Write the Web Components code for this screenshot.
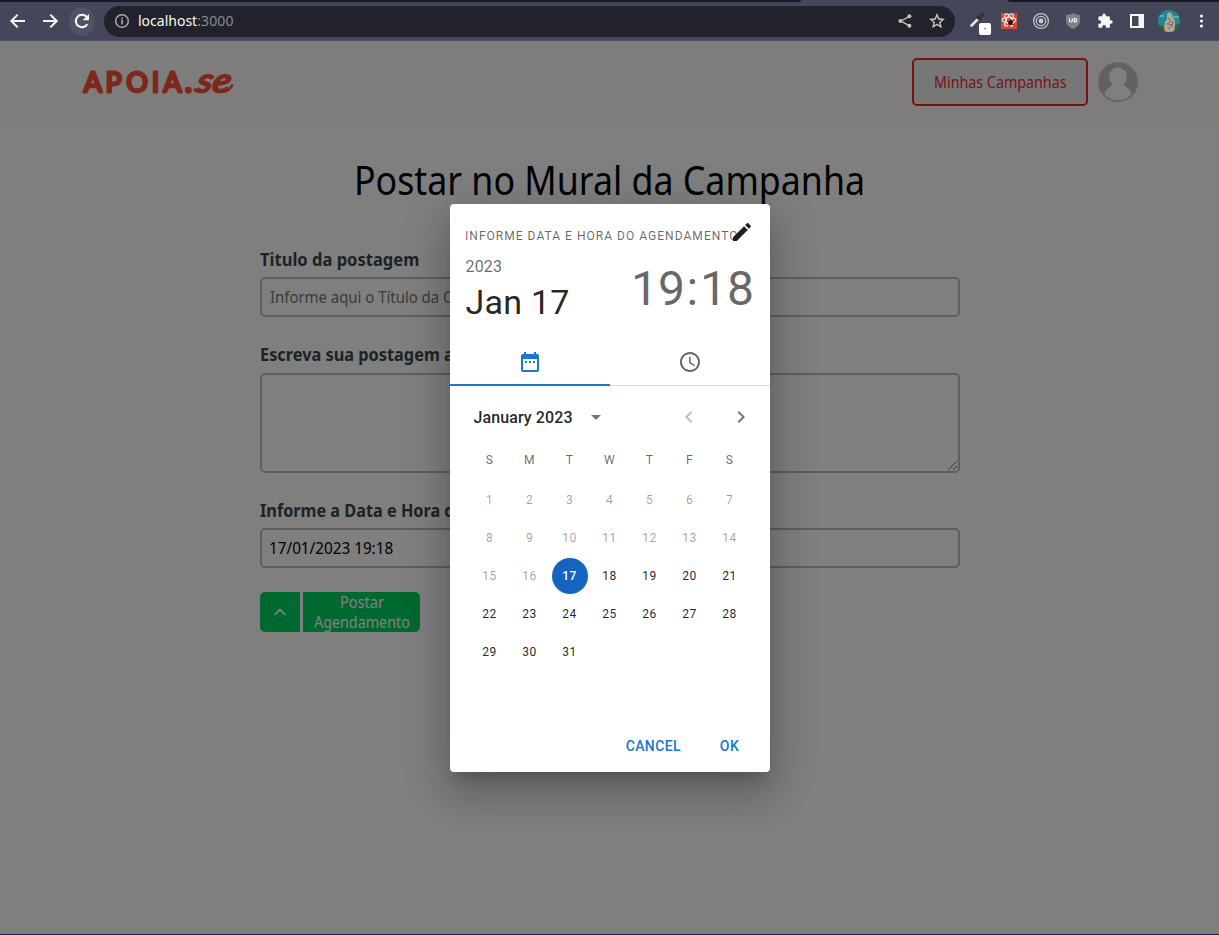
<!DOCTYPE html>
<html lang="pt-BR">
<head>
<meta charset="utf-8">
<title>APOIA.se</title>
<style>
  html, body { margin: 0; height: 100%; overflow: hidden; background: #fff; }
  body { font-family: "Noto Sans", sans-serif; }
</style>
</head>
<body>
<app-window></app-window>

<script>
function component(name, html) {
  const template = document.createElement('template');
  template.innerHTML = html;
  customElements.define(name, class extends HTMLElement {
    constructor() {
      super();
      this.attachShadow({ mode: 'open' }).appendChild(template.content.cloneNode(true));
    }
  });
}

component('app-window', `
  <style>
    :host { display: flex; flex-direction: column; height: 935px; width: 1219px; position: relative; overflow: hidden; }
    main { flex: 1; display: flex; flex-direction: column; background: #fff; }
    footer { height: 1px; background: #1e1d4c; display: flex; }
    .backdrop { position: absolute; inset: 41px 0 1px 0; background: rgba(0,0,0,.5); display: flex; justify-content: center; align-items: flex-start; padding-top: 163px; box-sizing: border-box; padding-left: 1px; }
  </style>
  <browser-bar></browser-bar>
  <main>
    <site-header></site-header>
    <post-form></post-form>
  </main>
  <footer></footer>
  <div class="backdrop"><date-dialog></date-dialog></div>
`);

component('browser-bar', `
  <style>
    :host { display: block; height: 41px; background: #44475a; border-bottom: 0; }
    .tabs { height: 2px; display: flex; justify-content: space-between; }
    .tabs i { background: #191a21; display: block; height: 2px; }
    .tabs i:first-child { width: 801px; border-bottom-right-radius: 2px; }
    .tabs i:last-child { width: 211px; border-bottom-left-radius: 2px; }
    .row { display: flex; align-items: center; height: 38px; border-bottom: 1px solid #4f5169; }
    svg { display: block; flex: none; }
    .nav { display: flex; align-items: center; padding-left: 5px; gap: 6px; width: 104px; box-sizing: border-box; }
    .nav span { width: 26px; height: 29px; display: flex; align-items: center; justify-content: center; }
    .nav .reload { background: #505366; border-radius: 50%; }
    .url { width: 851px; height: 31px; margin-top: 0; box-sizing: border-box; border-radius: 16px; background: #21222c; display: flex; align-items: center; padding: 0 10px; font-size: 14px; color: #f8f8f2; }
    .url .addr { flex: 1; padding-left: 8px; white-space: nowrap; line-height: 20px; }
    .url em { font-style: normal; color: #8b8b90; letter-spacing: .15px; }
    .url .acts { display: flex; gap: 16px; }
    .ext { display: flex; align-items: center; flex: 1; padding-left: 11px; gap: 10px; }
    .ext svg { width: 22px; height: 22px; }
  </style>
  <div class="tabs"><i></i><i></i></div>
  <div class="row">
    <div class="nav">
      <span><svg width="20" height="20" viewBox="0 0 20 20" fill="none" stroke="#f8f8f2" stroke-width="2"><path d="M17 10H4M9.7 3.6 3.3 10l6.4 6.4"/></svg></span>
      <span><svg width="20" height="20" viewBox="0 0 20 20" fill="none" stroke="#f8f8f2" stroke-width="2"><path d="M3 10h13M10.3 3.6l6.4 6.4-6.4 6.4"/></svg></span>
      <span class="reload"><svg width="20" height="20" viewBox="0 0 20 20"><path d="M15.3 13.3A6.2 6.2 0 1 1 14.6 5.8" fill="none" stroke="#f8f8f2" stroke-width="2.1"/><path d="M17 2.9v6.3h-6.3z" fill="#f8f8f2"/></svg></span>
    </div>
    <div class="url">
      <svg width="16" height="16" viewBox="0 0 16 16"><circle cx="8" cy="8" r="6.3" fill="none" stroke="#a9a9aa" stroke-width="1.5"/><path d="M7.2 7.1h1.7v4.2H7.2zM7.2 4.6h1.7v1.6H7.2z" fill="#a9a9aa"/></svg>
      <span class="addr">localhost<em>:3000</em></span>
      <span class="acts">
        <svg width="16" height="16" viewBox="0 0 16 16" fill="#c4c4bf"><path d="M12.2 3.6 3.8 8l8.4 4.6" fill="none" stroke="#c4c4bf" stroke-width="1.4"/><circle cx="12.4" cy="3.3" r="2"/><circle cx="3.4" cy="8" r="2"/><circle cx="12.4" cy="12.8" r="2"/></svg>
        <svg width="16" height="16" viewBox="0 0 24 24" fill="#c4c4bf"><path d="M24 8.6 15.4 7.900 12 0 8.600 7.900 0 8.600l6.500 5.700L4.600 22.700 12 18.300l7.400 4.400-1.900-8.400L24 8.600zM12 15.900l-4.200 2.600 1.100-4.900-3.700-3.200 4.900-.4L12 5.400l1.900 4.600 4.900.4-3.700 3.200 1.100 4.900L12 15.900z"/></svg>
      </span>
    </div>
    <div class="ext">
      <svg viewBox="0 0 22 22" overflow="visible"><path d="M5.500 15.500 12.500 8.500" stroke="#e7e7e4" stroke-width="2.600" stroke-linecap="round"/><path d="M12.500 7.500 16.500 4.500" stroke="#34343a" stroke-width="4" stroke-linecap="round"/><path d="m10.500 6.500 4.500 4" stroke="#34343a" stroke-width="1.800"/><rect x="13" y="13" width="12" height="12" rx="2" fill="#fff"/><path d="M17.800 18h1.200v1.200h-1.200z" fill="#e8a040"/><path d="M19 18h1v1.200h-1z" fill="#4a8cdc"/></svg>
      <svg viewBox="0 0 22 22"><path fill="#d84a38" d="M3 3h16v16H3z"/><g fill="none" stroke="#f2dcd6" stroke-width="1.300"><ellipse cx="11" cy="10" rx="6.800" ry="2.700"/><ellipse cx="11" cy="10" rx="6.800" ry="2.700" transform="rotate(60 11 10)"/><ellipse cx="11" cy="10" rx="6.800" ry="2.700" transform="rotate(120 11 10)"/></g><ellipse cx="12.500" cy="12.500" rx="2" ry="2.900" fill="#2b1010" transform="rotate(35 12.500 12.500)"/><path d="m9 11 7 4M10.500 15.500l5-4.500" stroke="#2b1010" stroke-width=".9"/></svg>
      <svg viewBox="0 0 22 22"><g fill="none" stroke="#bfc0c7" stroke-width="1.300"><circle cx="11" cy="11" r="7.400"/><circle cx="11" cy="11" r="4.700"/></g><circle cx="11" cy="11" r="2.400" fill="#c9cad0"/></svg>
      <svg viewBox="0 0 22 22"><path fill="#808080" d="M11 3c2.500 1.500 5 1.900 7 1.900V11c0 4-3.500 6.500-7 8-3.500-1.500-7-4-7-8V4.900C6 4.900 8.500 4.500 11 3z"/><path d="M7.500 8.200v2.300c0 2 2.800 2 2.800 0V8.200M12.300 8.200v3.700c3.200.2 3.200-3.500 0-3.500" fill="none" stroke="#f2f2f2" stroke-width="1.200"/></svg>
      <svg viewBox="0 0 22 22"><path transform="translate(3 2.800) scale(.68)" fill="#f8f8f2" d="M20.500 11H19V7c0-1.100-.9-2-2-2h-4V3.500C13 2.120 11.880 1 10.500 1S8 2.120 8 3.500V5H4c-1.100 0-1.990.9-1.990 2v3.800H3.500c1.490 0 2.700 1.210 2.700 2.700s-1.210 2.700-2.700 2.700H2V20c0 1.100.9 2 2 2h3.800v-1.500c0-1.490 1.210-2.700 2.700-2.700 1.490 0 2.700 1.210 2.700 2.700V22H17c1.100 0 2-.9 2-2v-4h1.500c1.380 0 2.500-1.120 2.500-2.500S21.880 11 20.500 11z"/></svg>
      <svg viewBox="0 0 22 22"><path fill="#f8f8f2" fill-rule="evenodd" d="M4 4h14v14H4zM6 6v10h6.500V6z"/></svg>
      <svg viewBox="0 0 22 22"><defs><clipPath id="c"><circle cx="11" cy="11" r="11"/></clipPath></defs><g clip-path="url(#c)"><path fill="#218793" d="M0 0h22v22H0z"/><path fill="#4fb0b8" d="M1 5h5v2H1zM15 6h6v2h-6z"/><path fill="#485b26" d="M0 15l5 1 4 6H0zM17 15l5-1v8h-6z"/><path fill="#b3a79b" d="M9 4c1-2 4-2 5 0l.5 3L17 11v4l-1 7H7l-1-5 1-5 2-3z"/><path d="m10 8 3 3-4 3 5 1-4 4M15 11l-1 6" stroke="#75695f" fill="none" stroke-width="1"/></g></svg>
      <svg viewBox="0 0 22 22" fill="#f8f8f2"><circle cx="11.500" cy="6" r="1.600"/><circle cx="11.500" cy="11" r="1.600"/><circle cx="11.500" cy="16" r="1.600"/></svg>
    </div>
  </div>
`);

component('site-header', `
  <style>
    :host { display: flex; height: 81px; box-sizing: border-box; padding: 0 81px 0 82px; align-items: center; justify-content: space-between; background: #fefaf7; }
    .logo text { fill: #f9503f; stroke: #f9503f; stroke-linejoin: round; stroke-linecap: round; }
    .logo .a { font: 400 27px Lato, sans-serif; stroke-width: 2.800px; }
    .logo .b { font: italic 400 33px Lato, sans-serif; stroke-width: 2.200px; }
    .right { display: flex; align-items: center; gap: 10px; }
    button { all: unset; box-sizing: border-box; width: 176px; height: 48px; border: 2px solid #f02820; border-radius: 5px; background: #efefef; color: #f02c30; font-size: 16px; line-height: 24px; display: flex; justify-content: center; align-items: center; }
    svg { display: block; }
  </style>
  <svg class="logo" width="152" height="48" viewBox="0 0 152 48">
    <text class="a" y="33.800"><tspan x="1.800">A</tspan><tspan x="23.600">P</tspan><tspan x="44.200">O</tspan><tspan x="69.700">I</tspan><tspan x="81.200">A</tspan><tspan x="103.300" stroke-width="3.600">.</tspan></text>
    <text class="b" transform="translate(114 33.800) skewX(-10) scale(1.150 1)">se</text>
    <path d="M117 31q-2 4-4.500.5M142 33.800q5-1 8-6.500" fill="none" stroke="#f9503f" stroke-width="2.600" stroke-linecap="round"/>
  </svg>
  <div class="right">
    <button><fit-text w="133">Minhas Campanhas</fit-text></button>
    <svg width="40" height="40" viewBox="0 0 40 40"><defs><clipPath id="p"><circle cx="20" cy="20" r="18.300"/></clipPath></defs><circle cx="20" cy="20" r="20" fill="#cacbcc"/><circle cx="20" cy="20" r="18.700" fill="#c2c3c4"/><g clip-path="url(#p)" fill="#fff"><ellipse cx="20" cy="15" rx="9" ry="9.400"/><path d="M5 38c1-9 5-13 10-15h10c5 2 9 6 10 15z"/></g></svg>
  </div>
`);

component('post-form', `
  <style>
    :host { display: flex; flex-direction: column; width: 700px; margin: 0 auto; padding-left: 1px; color: #37474f; }
    h1 { margin: 0 0 0 -2px; padding-top: 30px; display: flex; justify-content: center; color: #000; font-weight: 400; font-size: 40px; line-height: 56px; }
    .t1 { margin-top: 39px; } .t2 { margin-top: 25px; } .t3 { margin-top: 25px; }
    .label { height: 24px; font-weight: 700; font-size: 18px; line-height: 24px; margin-bottom: 6px; margin-left: -.5px; }
    .t2 { margin-bottom: 7px; }
    .field { box-sizing: border-box; height: 40px; border: 2px solid #bdbdbd; border-radius: 5px; padding: 0 7px; display: flex; align-items: center; font-size: 16px; line-height: 24px; color: #000; }
    .ph { color: #757575; padding-left: 8px; }
    .area { height: 100px; align-items: flex-end; justify-content: flex-end; padding: 0 1px 1px 0; }
    .actions { display: flex; gap: 3px; margin-top: 24px; height: 40px; }
    .actions div { background: #00d25f; color: #fff; display: flex; flex-direction: column; align-items: center; justify-content: center; font-size: 15.500px; line-height: 20px; }
    .up { width: 40px; border-radius: 5px 0 0 5px; }
    .post { width: 117px; border-radius: 0 5px 5px 0; }
  </style>
  <h1><fit-text w="511">Postar no Mural da Campanha</fit-text></h1>
  <div class="label t1"><fit-text w="159">Titulo da postagem</fit-text></div>
  <div class="field ph"><fit-text w="191">Informe aqui o Título da Ca</fit-text></div>
  <div class="label t2"><fit-text w="194">Escreva sua postagem a</fit-text></div>
  <div class="field area"><svg width="9" height="9" viewBox="0 0 9 9" stroke="#777" stroke-width="1"><path d="M0 9 9 0M5 9l4-4"/></svg></div>
  <div class="label t3"><fit-text w="195">Informe a Data e Hora d</fit-text></div>
  <div class="field"><fit-text w="124">17/01/2023 19:18</fit-text></div>
  <div class="actions">
    <div class="up"><svg width="14" height="14" viewBox="0 0 14 14" fill="none" stroke="#fff" stroke-width="1.900"><path d="M1.800 9.800 7 4.600l5.200 5.200"/></svg></div>
    <div class="post"><fit-text w="44">Postar</fit-text><fit-text w="96">Agendamento</fit-text></div>
  </div>
`);

component('date-dialog', `
  <style>
    :host { display: flex; flex-direction: column; width: 320px; height: 568px; background: #fff; border-radius: 4px; font-family: Roboto, sans-serif; color: rgba(0,0,0,.87);
      box-shadow: 0 11px 15px -7px rgba(0,0,0,.2), 0 24px 38px 3px rgba(0,0,0,.14), 0 9px 46px 8px rgba(0,0,0,.12); }
    svg { display: block; }
    .head { height: 134px; box-sizing: border-box; padding: 16px 16px 16px 15.500px; position: relative; }
    .over { font-size: 12px; line-height: 32px; color: rgba(0,0,0,.6); height: 32px; letter-spacing: 1px; margin-left: -.5px; }
    .pen { position: absolute; right: 16px; top: 16px; }
    .vals { display: flex; justify-content: space-between; }
    .year { font-size: 16px; line-height: 28px; padding-top: 1px; letter-spacing: .15px; color: rgba(0,0,0,.6); }
    .day { font-size: 34px; line-height: 42px; letter-spacing: .25px; }
    .time { font-size: 48px; line-height: 56px; padding-top: 9px; color: rgba(0,0,0,.6); display: flex; }
    .time i { font-style: normal; margin: 0 2px 0 1.500px; }
    .tabs { display: flex; height: 48px; box-sizing: border-box; border-bottom: 1px solid rgba(0,0,0,.12); }
    .tabs span { flex: 1; height: 48px; box-sizing: border-box; display: flex; align-items: center; justify-content: center; color: rgba(0,0,0,.6); }
    .tabs .on { color: #1976d2; border-bottom: 2px solid #1976d2; padding-top: 2px; }
    .month { display: flex; align-items: center; height: 30px; margin: 16px 12px 0 23.500px; font-size: 16px; font-weight: 500; letter-spacing: .1px; }
    .month b { font-weight: 500; width: 109.500px; }
    .month .sp { flex: 1; }
    .prev { color: rgba(0,0,0,.26); margin-right: 28px; } .next, .dd { color: rgba(0,0,0,.54); }
    month-grid { margin: 8px 20px 0; }
    .acts { margin-top: auto; height: 52px; display: flex; justify-content: flex-end; padding-right: 8.500px; align-items: center; gap: 11.500px; color: #1976d2; font-size: 14px; font-weight: 500; letter-spacing: .4px; }
    .acts span { min-width: 64px; padding: 0 5px; height: 36px; line-height: 37px; box-sizing: border-box; text-align: center; }
  </style>
  <div class="head">
    <div class="over"><fit-text w="273">INFORME DATA E HORA DO AGENDAMENTO</fit-text></div>
    <svg class="pen" width="24" height="24" viewBox="0 0 24 24"><path fill="#202020" d="M3 17.250V21h3.750L17.810 9.940l-3.750-3.750L3 17.250zM20.710 7.040c.39-.39.39-1.020 0-1.410l-2.340-2.340c-.39-.39-1.020-.39-1.410 0l-1.830 1.830 3.750 3.750 1.830-1.830z"/></svg>
    <div class="vals">
      <div><div class="year">2023</div><div class="day">Jan 17</div></div>
      <div class="time">19<i>:</i>18</div>
    </div>
  </div>
  <div class="tabs">
    <span class="on"><svg width="24" height="24" viewBox="0 0 24 24" fill="currentColor"><path d="M9 11H7v2h2v-2zm4 0h-2v2h2v-2zm4 0h-2v2h2v-2zm2-7h-1V2h-2v2H8V2H6v2H5c-1.110 0-1.990.9-1.990 2L3 20c0 1.100.89 2 2 2h14c1.100 0 2-.9 2-2V6c0-1.100-.9-2-2-2zm0 16H5V9h14v11z"/></svg></span>
    <span><svg width="24" height="24" viewBox="0 0 24 24" fill="currentColor"><path d="M11.990 2C6.470 2 2 6.480 2 12s4.470 10 9.990 10C17.520 22 22 17.520 22 12S17.520 2 11.990 2zM12 20c-4.420 0-8-3.580-8-8s3.580-8 8-8 8 3.580 8 8-3.580 8-8 8z"/><path d="M12.500 7H11v6l5.250 3.150.75-1.230-4.500-2.670z"/></svg></span>
  </div>
  <div class="month">
    <b>January 2023</b>
    <svg class="dd" width="24" height="24" viewBox="0 0 24 24" fill="currentColor" style="margin-left:1px"><path d="m7 10 5 5 5-5z"/></svg>
    <span class="sp"></span>
    <svg class="prev" width="24" height="24" viewBox="0 0 24 24" fill="currentColor"><path d="M15.410 7.410 14 6l-6 6 6 6 1.410-1.410L10.830 12z"/></svg>
    <svg class="next" width="24" height="24" viewBox="0 0 24 24" fill="currentColor" style="margin-right:5px"><path d="M10 6 8.590 7.410 13.170 12l-4.580 4.590L10 18l6-6z"/></svg>
  </div>
  <month-grid></month-grid>
  <div class="acts"><span>CANCEL</span><span>OK</span></div>
`);

customElements.define('month-grid', class extends HTMLElement {
  constructor() {
    super();
    const names = [...'SMTWTFS'].map(d => `<span class="wd">${d}</span>`).join('');
    let days = '';
    for (let d = 1; d <= 31; d++) {
      days += `<span class="${d < 17 ? 'past' : d === 17 ? 'sel' : ''}">${d}</span>`;
    }
    this.attachShadow({ mode: 'open' }).innerHTML = `
      <style>
        :host { display: grid; grid-template-columns: repeat(7, 40px); grid-template-rows: 40px; grid-auto-rows: 36px; row-gap: 2px; justify-items: center; font-size: 12px; letter-spacing: .4px; }
        span { width: 38px; box-sizing: border-box; padding-right: 1px; height: 36px; line-height: 36px; text-align: center; }
        .wd { color: rgba(0,0,0,.6); height: 40px; line-height: 40px; }
        .past { color: rgba(0,0,0,.38); }
        .sel { width: 36px; border-radius: 50%; background: #1565c0; color: #fff; font-weight: 500; }
      </style>${names}${days}`;
  }
});

/* One-line text whose advance width is fitted to the w attribute. */
customElements.define('fit-text', class extends HTMLElement {
  constructor() {
    super();
    this.attachShadow({ mode: 'open' }).innerHTML = `
      <style>
        :host { display: block; flex: none; }
        span { display: inline-block; white-space: nowrap; transform-origin: 0 50%; }
      </style><span><slot></slot></span>`;
  }
  connectedCallback() {
    const w = +this.getAttribute('w');
    const span = this.shadowRoot.querySelector('span');
    this.style.width = w + 'px';
    span.style.transform = `scaleX(${w / span.offsetWidth})`;
  }
});
</script>
</body>
</html>
